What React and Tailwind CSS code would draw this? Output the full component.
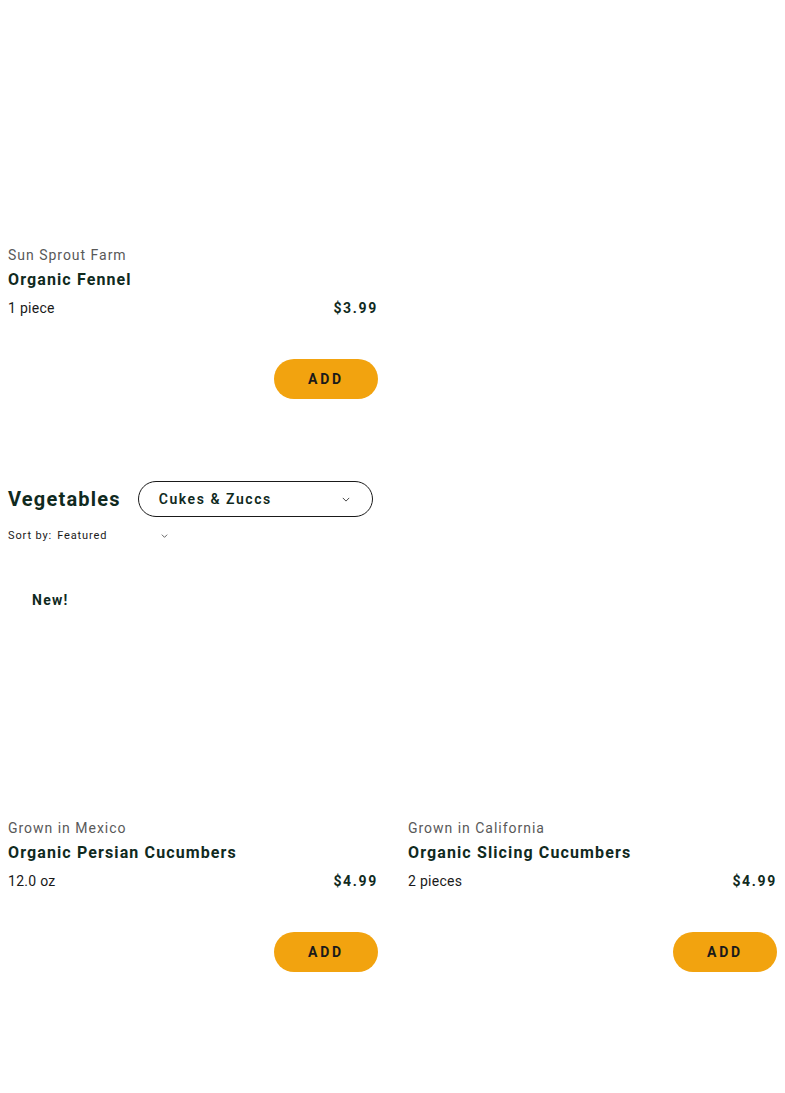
import React from 'react'

const font = { fontFamily: 'Roboto, "Liberation Sans", sans-serif' }

const Chevron = ({ className }) => (
  <svg viewBox="0 0 10 6" className={className} fill="none" stroke="currentColor" strokeWidth="1">
    <path d="M1 1l4 4 4-4" />
  </svg>
)

const ProductCard = ({ origin, name, size, price, badge }) => (
  <div className="flex flex-col">
    <div className="h-[240px] relative">
      {badge && (
        <span className="absolute left-[24px] top-[17px] text-[14px] font-bold tracking-[0.09em] text-[#102a1e]">
          {badge}
        </span>
      )}
    </div>
    <p className="text-[14px] text-[#595959] tracking-[0.07em] leading-[18px] mt-[6px]">{origin}</p>
    <h3 className="text-[16px] font-bold text-[#102a1e] tracking-[0.07em] leading-[20px] mt-[6px]">{name}</h3>
    <div className="flex justify-between items-center mt-[9px] leading-[18px]">
      <span className="text-[14px] text-[#1a1a1a] tracking-[0.02em]">{size}</span>
      <span className="text-[14px] font-bold text-[#102a1e] tracking-[0.12em]">{price}</span>
    </div>
    <div className="flex justify-end mt-[42px]">
      <button className="w-[104px] h-[40px] rounded-full bg-[#f2a30f] text-[14px] font-bold tracking-[0.2em] text-[#1a1a1a]">
        ADD
      </button>
    </div>
  </div>
)

export default function App() {
  return (
    <div style={font} className="bg-white w-[785px] min-h-[1093px] px-[8px]">
      <div className="grid grid-cols-[370px_369px] gap-x-[30px]">
        <ProductCard origin="Sun Sprout Farm" name="Organic Fennel" size="1 piece" price="$3.99" />
        <div />
      </div>

      <div className="mt-[82px] flex items-center gap-[17px] w-[365px]">
        <h2 className="text-[20px] font-bold text-[#102a1e] tracking-[0.06em]">Vegetables</h2>
        <button className="flex-1 h-[36px] rounded-full border border-[#1a1a1a] flex items-center justify-between pl-[20px] pr-[22px]">
          <span className="text-[14px] font-semibold tracking-[0.11em] text-[#102a1e]">Cukes &amp; Zuccs</span>
          <Chevron className="w-[8px] h-[5px] text-[#1a1a1a]" />
        </button>
      </div>

      <div className="flex items-center mt-[12px] text-[11px] text-[#1a1a1a] tracking-[0.08em] leading-[14px]">
        <span>Sort by:</span>
        <span className="ml-[5px] w-[104px]">Featured</span>
        <Chevron className="w-[7px] h-[4px]" />
      </div>

      <div className="grid grid-cols-[370px_369px] gap-x-[30px] mt-[30px]">
        <ProductCard badge="New!" origin="Grown in Mexico" name="Organic Persian Cucumbers" size="12.0 oz" price="$4.99" />
        <ProductCard origin="Grown in California" name="Organic Slicing Cucumbers" size="2 pieces" price="$4.99" />
      </div>
    </div>
  )
}
